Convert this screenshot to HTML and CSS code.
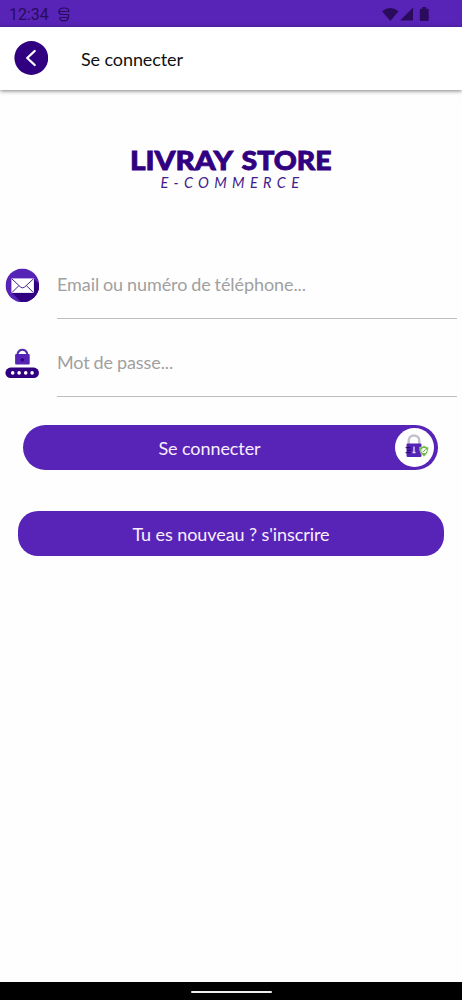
FILE: index.html
```html
<!DOCTYPE html>
<html lang="fr">
<head>
<meta charset="utf-8">
<title>Livray Store</title>
<link rel="stylesheet" href="styles.css">
</head>
<body>
<div class="screen">
  <div class="status">
    <span class="clock">12:34</span>
    <svg class="debug" width="12" height="15" viewBox="0 0 12 15" fill="none" stroke="currentColor" stroke-width="1.200"><path d="M11 4.500C11 2 9 1 6 1S1 2 1 4.500 2 7.500 4 7.500h6.500v2c0 3-1.500 4.300-4.500 4.300S1.500 12.500 1.500 10.500M0 4.500h11M2 10.500h8.500"/></svg>
    <svg class="signals" width="50" height="15" viewBox="0 0 51 16" fill="currentColor"><path d="M0 4.500Q9 -2.500 17.500 4.500L8.800 14.800ZM33 .5V14.500H19.200ZM43 1.800V0h4v1.800h1.700q1 0 1 1v11q0 1-1 1h-7.400q-1 0-1-1v-11q0-1 1-1Z"/></svg>
  </div>
  <header class="bar">
    <svg class="back" width="34" height="34" viewBox="0 0 34 34"><circle cx="17.300" cy="17" r="16.900" fill="#300080"/><path d="M20.700 10L13.200 17l7.500 7" fill="none" stroke="#fff" stroke-width="2.300" stroke-linecap="round" stroke-linejoin="round"/></svg>
    <h1 class="title">Se connecter</h1>
  </header>
  <main class="content">
    <svg class="logo" width="222" height="60" viewBox="120 140 222 60">
      <text class="brand" x="130" y="169.500" textLength="103" lengthAdjust="spacingAndGlyphs">LIVRAY</text>
      <text class="brand" x="241.500" y="169.500" textLength="90" lengthAdjust="spacingAndGlyphs">STORE</text>
      <text class="tagline" x="160.500" y="187.500" textLength="138.500">E-COMMERCE</text>
    </svg>
    <div class="field">
      <svg class="icon" width="34" height="34" viewBox="-.4 -.4 34 34">
        <clipPath id="disc"><circle cx="17" cy="17" r="16.800"/></clipPath>
        <g clip-path="url(#disc)"><path fill="#5524b6" d="M0 0h34v34H0z"/><path fill="#300080" d="M28 10l8 8v18H18L6.500 24.300z"/></g>
        <path fill="#fff" d="M6 10h22.500v14.500H6z"/>
        <path fill="none" stroke="#42208c" stroke-width="1" d="M6.500 10.500l8.700 8.200q2 1.600 4 0l8.800-8.200M6.500 24.200l7-7M28 24.200l-7-7"/>
      </svg>
      <div class="input email">Email ou numéro de téléphone...</div>
    </div>
    <div class="field">
      <svg class="icon" width="34" height="34" viewBox="-.4 -1.600 34 34">
        <path d="M12.300 8V5.500a5 5 0 0 1 9.400 0V8" fill="none" stroke="#5130a8" stroke-width="2"/>
        <rect x="9.700" y="6.500" width="14.600" height="10.500" rx="1" fill="#5524b6"/><path d="M17 10.300l2 1.500-1 2h-2l-1-2z" fill="#300080"/>
        <rect x="0" y="20" width="33.600" height="10.500" rx="5.250" fill="#300080"/>
        <g fill="#fff"><circle cx="7.300" cy="25.300" r="1.800"/><circle cx="13.700" cy="25.300" r="1.800"/><circle cx="20.300" cy="25.300" r="1.800"/><circle cx="26.700" cy="25.300" r="1.800"/></g>
      </svg>
      <div class="input password">Mot de passe...</div>
    </div>
    <button class="button login"><span class="label">Se connecter</span>
      <svg class="badge" width="39" height="39" viewBox="0 0 39 39">
        <circle cx="19.500" cy="19.500" r="19.500" fill="#fff"/>
        <path d="M13.700 16.500v-3.800a5.300 5.300 0 0 1 10.600 0v3.800" fill="none" stroke="#c3c2cc" stroke-width="2.500"/>
        <rect x="11.500" y="15.500" width="15" height="13.500" rx="1.200" fill="#5524b6"/>
        <path d="M10.500 19.700h5M12 22.200h4M10.500 24.700h5" stroke="#250066" stroke-width="1"/>
        <path d="M19 18.500v6M17.500 24.500h3" stroke="#e8dcff" stroke-width="1.300"/>
        <path d="M29 17.800q2 1.300 4.300 1.500.3 6-4.300 9.200-4.600-3.200-4.300-9.200 2.300-.2 4.300-1.500z" fill="#6bb23e" stroke="#d9efcc" stroke-width=".6"/>
        <circle cx="29" cy="22.600" r="2.700" fill="#fff"/><path d="M27.500 22.700l1 1 2-2.300" fill="none" stroke="#529b2e"/>
      </svg>
    </button>
    <button class="button signup"><span class="label">Tu es nouveau ? s'inscrire</span></button>
  </main>
  <footer class="nav"><div class="handle"></div></footer>
</div>
</body>
</html>
```
FILE: styles.css
```css
* { box-sizing: border-box; }
body { margin: 0; background: #fff; font-family: Lato, "Liberation Sans", sans-serif; }
.screen { height: 1000px; display: flex; flex-direction: column; background: #fefefe; }
.status { height: 27px; flex: none; display: flex; align-items: center; padding: 1px 31px 0 9px; background: #5724b7; color: #2a0b5c; }
.clock { font: 16px Roboto, sans-serif; }
.debug { margin-left: 9px; }
.signals { margin-left: auto; }
.bar { height: 63px; flex: none; display: flex; align-items: center; padding-left: 14px; background: #fff; box-shadow: 0 1px 4px rgba(0, 0, 0, .5); }
.back { margin-top: -1px; }
.title { margin: 0 0 0 33px; font-size: 18px; font-weight: 400; letter-spacing: -.1px; color: #111; }
.content { flex: 1; display: flex; flex-direction: column; padding-top: 50px; }
.logo { align-self: center; margin: 0 0 47px; }
.brand { font-size: 26px; font-weight: 900; fill: #300080; stroke: #300080; stroke-width: .8px; }
.tagline { font-size: 14.5px; font-style: italic; fill: #431c8c; }
.field { height: 77.5px; display: flex; padding: 21px 5px 0; gap: 18px; }
.icon { flex: none; }
.input { flex: 1; height: 51px; padding-top: 4px; border-bottom: 1px solid #bdbdbd; font-size: 18px; line-height: 24px; letter-spacing: -.08px; word-spacing: -.6px; color: #a0a0a0; }
.button { display: flex; align-items: center; justify-content: center; position: relative; height: 45px; padding: 0; border: 0; background: #5724b7; color: #fbeeff; font-family: inherit; font-size: 18px; letter-spacing: -.08px; }
.login { margin: 23px 24px 0 23px; padding-right: 42px; border-radius: 23px; }
.signup { margin: 41px 18px 0; border-radius: 20px; }
.badge { position: absolute; right: 4px; top: 3px; }
.nav { height: 18px; flex: none; display: flex; justify-content: center; align-items: center; padding-top: 2px; background: #000; }
.handle { width: 81px; height: 2px; border-radius: 1px; background: #eee; }
```
